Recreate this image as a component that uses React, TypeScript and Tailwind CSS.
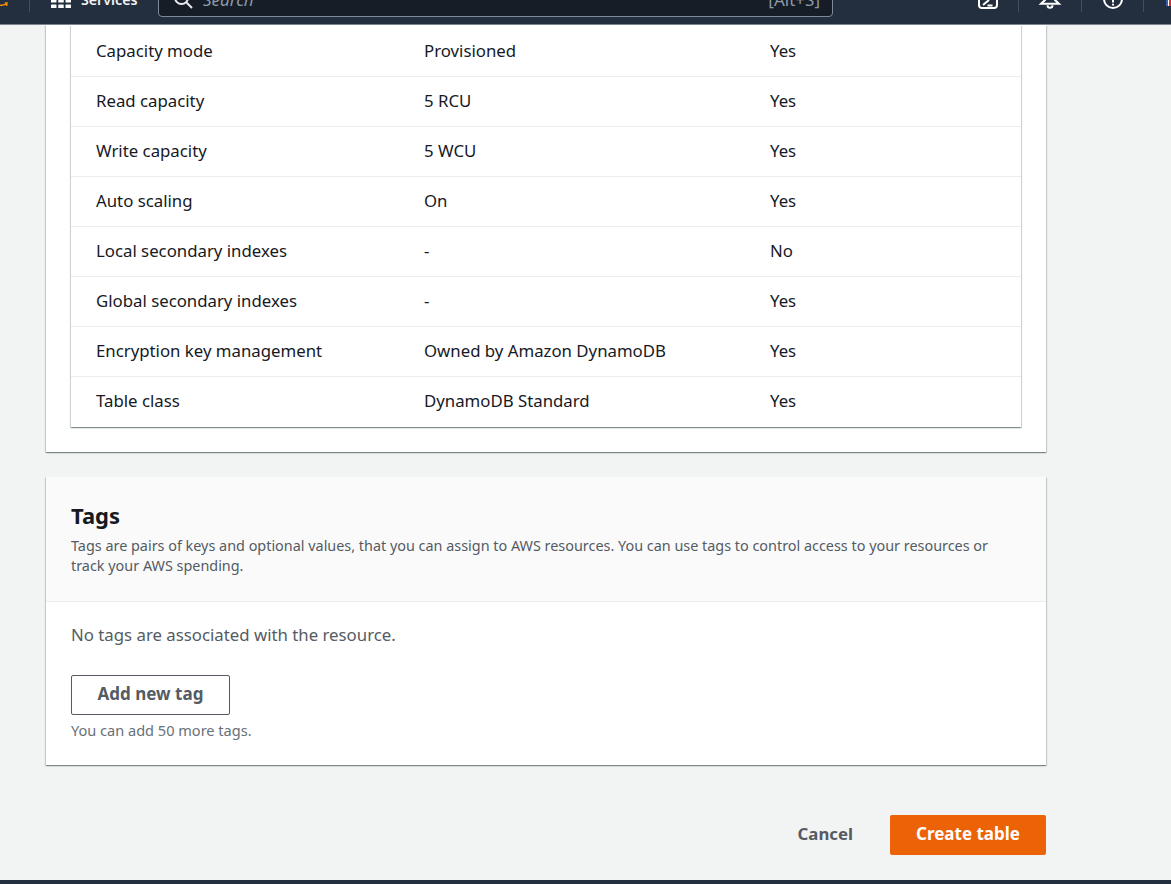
import React from "react";

const rows: [string, string, string][] = [
  ["Capacity mode", "Provisioned", "Yes"],
  ["Read capacity", "5 RCU", "Yes"],
  ["Write capacity", "5 WCU", "Yes"],
  ["Auto scaling", "On", "Yes"],
  ["Local secondary indexes", "-", "No"],
  ["Global secondary indexes", "-", "Yes"],
  ["Encryption key management", "Owned by Amazon DynamoDB", "Yes"],
  ["Table class", "DynamoDB Standard", "Yes"],
];

function Sep({ className }: { className: string }) {
  return <div className={`w-px h-[12px] self-start mt-[20px] bg-[#414d5c] shrink-0 ${className}`} />;
}

function TopBar() {
  return (
    <header className="h-[25px] shrink-0 overflow-hidden bg-[#232f3e] border-b border-[#7d8590]">
      <div className="-mt-[20px] h-[40px] flex items-center text-white">
        <svg width="8" height="8" viewBox="0 0 8 8" className="self-start mt-[22px] shrink-0" fill="none">
          <path d="M0 3.2C2.5 3.6 4.6 2.8 6.6 1.6M4.8 0.9L7 1 6.6 4" stroke="#f79400" strokeWidth="1.4" />
        </svg>
        <Sep className="ml-[21px]" />
        <svg width="20" height="30" viewBox="0 0 20 30" className="ml-[21px] shrink-0 self-start" fill="#fff">
          {[0, 7.25, 14.5].map((x) =>
            [19, 24.5].map((y) => <rect key={`${x}-${y}`} x={x} y={y} width="5.5" height="3.5" rx="0.6" />)
          )}
        </svg>
        <span className="ml-[10px] w-[77px] text-[14.2px] font-semibold text-[#f2f3f3] shrink-0">Services</span>
        <div className="h-[37px] w-[675px] self-start rounded-[4px] border border-[#7d8998] bg-[#161d26] flex items-center shrink-0">
          <svg width="20" height="20" viewBox="0 0 20 20" className="ml-[14px] shrink-0 mt-[1px]" fill="none" stroke="#e9ebed" strokeWidth="2">
            <circle cx="8.5" cy="8.5" r="6.5" />
            <path d="M13.5 13.5L19 19" />
          </svg>
          <span className="ml-[10px] italic text-[17px] text-[#8d99a8] mt-[2px]">Search</span>
          <span className="ml-auto mr-[12px] text-[17px] text-[#8d99a8] mt-[2px]">[Alt+S]</span>
        </div>
        <svg width="20" height="20" viewBox="0 0 20 20" className="ml-[145px] shrink-0 self-start mt-[20px]" fill="none" stroke="#fff" strokeWidth="2" overflow="visible">
          <rect x="1" y="-12" width="18" height="20" rx="3" />
          <path d="M5 5L11 0M9.5 5.5h5" />
        </svg>
        <Sep className="ml-[20px]" />
        <svg width="20" height="20" viewBox="0 0 20 20" className="ml-[21px] shrink-0 self-start mt-[20px]" fill="none" stroke="#fff" strokeWidth="2" overflow="visible">
          <path d="M5 -4V0L1 3.8H19L15 0V-4" />
          <path d="M7.5 5.2a2.5 2.5 0 0 0 5 0" />
        </svg>
        <Sep className="ml-[21px]" />
        <svg width="20" height="20" viewBox="0 0 20 20" className="ml-[21px] shrink-0 self-start mt-[20px]" fill="none" stroke="#fff" strokeWidth="2" overflow="visible">
          <circle cx="10" cy="-1" r="9" />
          <path d="M10 -3V2.5M10 3.8V5.6" />
        </svg>
        <Sep className="ml-[20px]" />
        <div className="ml-[22px] w-[5px] h-[6px] self-start mt-[20px] shrink-0 flex">
          <div className="flex-1 bg-[#3b5bb5]" />
          <div className="flex-1 bg-white" />
          <div className="flex-1 bg-[#d9342b]" />
        </div>
      </div>
    </header>
  );
}

const cardShadow =
  "shadow-[0_1px_1px_0_rgba(0,28,36,0.3),1px_1px_1px_0_rgba(0,28,36,0.15),-1px_1px_1px_0_rgba(0,28,36,0.15)]";

export default function App() {
  return (
    <div
      className="h-[884px] overflow-hidden flex flex-col bg-[#f2f3f3] text-[16.8px] leading-[22px] text-[#16191f]"
      style={{ fontFamily: '"Noto Sans", "Open Sans", Arial, sans-serif' }}
    >
      <TopBar />
      <main className="flex-1 w-[1000px] ml-[46px]">
        <section className={`bg-white px-[25px] pb-[25px] h-[427px] ${cardShadow}`}>
          <div className={`bg-white pt-[2px] h-[402px] ${cardShadow}`}>
            {rows.map((r, i) => (
              <div
                key={r[0]}
                className={`h-[50px] px-[25px] pb-[2px] grid grid-cols-[328px_346px_1fr] items-center ${
                  i < rows.length - 1 ? "border-b border-[#eaeded]" : ""
                }`}
              >
                <span>{r[0]}</span>
                <span>{r[1]}</span>
                <span>{r[2]}</span>
              </div>
            ))}
          </div>
        </section>

        <section className={`mt-[25px] bg-white ${cardShadow}`}>
          <div className="h-[125px] bg-[#fafafa] border-b border-[#eaeded] px-[25px] pt-[23px]">
            <h2 className="text-[22px] leading-[30px] font-bold">Tags</h2>
            <p className="mt-[6px] text-[14.4px] leading-[20px] text-[#545b64]">
              Tags are pairs of keys and optional values, that you can assign to AWS resources. You can use tags to control access to your resources or track your AWS spending.
            </p>
          </div>
          <div className="px-[25px] pt-[22px] pb-[25px]">
            <p className="text-[#545b64]">No tags are associated with the resource.</p>
            <button className="mt-[29px] w-[159px] h-[40px] pb-[2px] block border border-[#545b64] rounded-[2px] font-bold text-[17px] text-[#545b64]">
              Add new tag
            </button>
            <p className="mt-[5px] text-[14.55px] leading-[20px] text-[#687078]">You can add 50 more tags.</p>
          </div>
        </section>

        <div className="mt-[50px] flex justify-end items-center">
          <button className="font-bold text-[#545b64] -mt-[2px]">Cancel</button>
          <button className="ml-[37px] w-[156px] h-[40px] pb-[2px] rounded-[2px] bg-[#ec6207] text-white font-bold text-[17px]">
            Create table
          </button>
        </div>
      </main>
      <footer className="h-[4px] shrink-0 bg-[#232f3e]" />
    </div>
  );
}
